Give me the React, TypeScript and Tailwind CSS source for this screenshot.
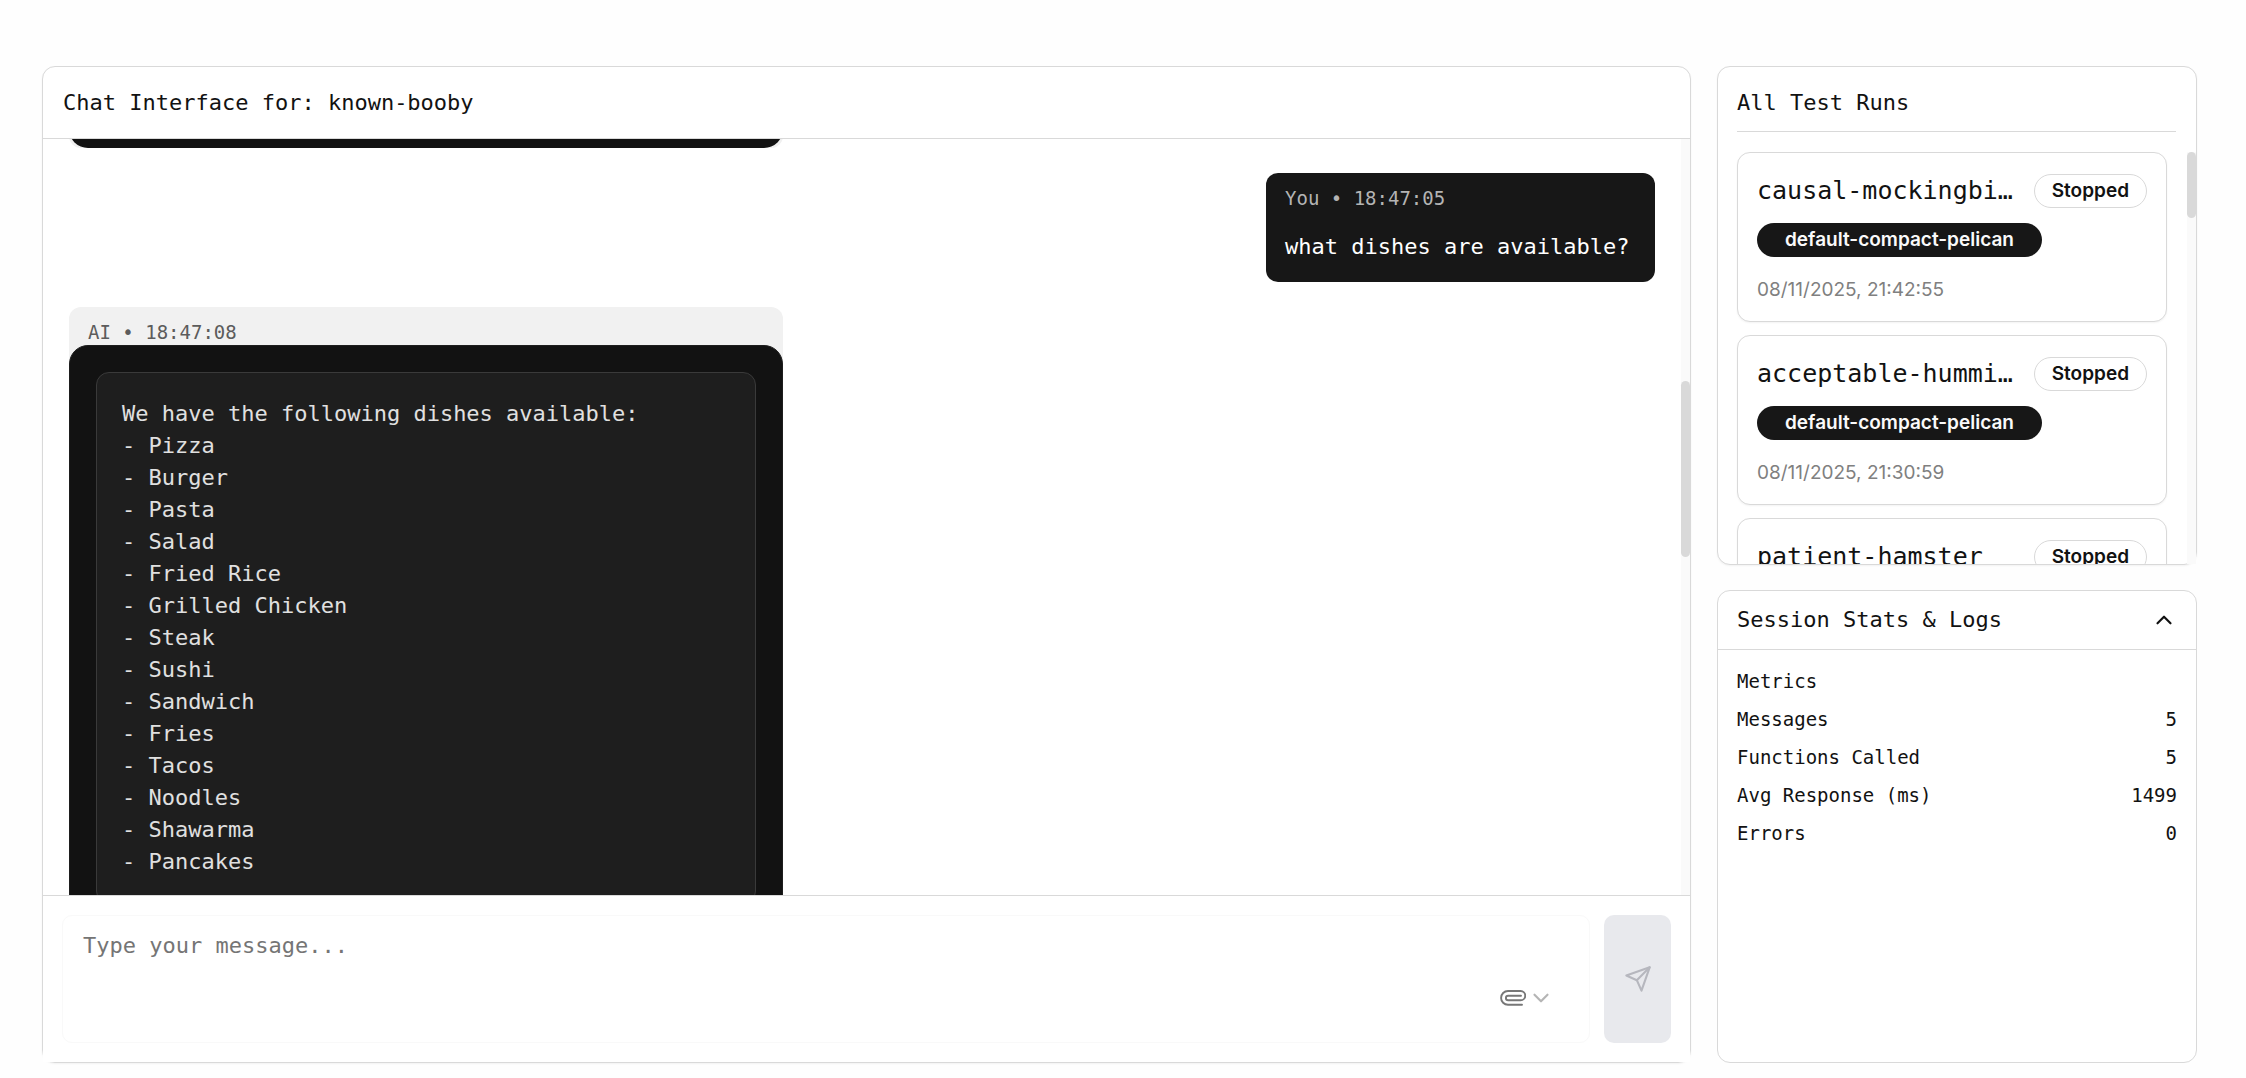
import React from "react";
import { ChevronDown, ChevronUp } from "lucide-react";

const dishes = [
  "Pizza",
  "Burger",
  "Pasta",
  "Salad",
  "Fried Rice",
  "Grilled Chicken",
  "Steak",
  "Sushi",
  "Sandwich",
  "Fries",
  "Tacos",
  "Noodles",
  "Shawarma",
  "Pancakes",
];

const runs = [
  { name: "causal-mockingbird", pipeline: "default-compact-pelican", date: "08/11/2025, 21:42:55" },
  { name: "acceptable-hummingbird", pipeline: "default-compact-pelican", date: "08/11/2025, 21:30:59" },
  { name: "patient-hamster", pipeline: "default-compact-pelican", date: "08/11/2025, 21:12:30" },
];

const metrics = [
  { label: "Messages", value: "5" },
  { label: "Functions Called", value: "5" },
  { label: "Avg Response (ms)", value: "1499" },
  { label: "Errors", value: "0" },
];

function PaperclipIcon() {
  return (
    <svg width="26" height="16" viewBox="0 0 26 16" fill="none" stroke="#777777" strokeWidth="1.9" strokeLinecap="round" aria-hidden="true">
      <path d="M22 14.8H8a6.9 6.9 0 0 1 0-13.8h12.6a4.6 4.6 0 0 1 0 9.3H8.2a2.3 2.3 0 0 1 0-4.6H21" />
    </svg>
  );
}

function SendIcon() {
  return (
    <svg width="28" height="28" viewBox="0 0 24 24" fill="none" stroke="#b6b7be" strokeWidth="1.8" strokeLinecap="round" strokeLinejoin="round" aria-hidden="true">
      <path d="M22 2 11 13" />
      <path d="M22 2 15 22l-4-9-9-4z" />
    </svg>
  );
}

function ChatPanel() {
  return (
    <main className="flex min-h-0 min-w-0 flex-col rounded-[13px] border border-[#d9d9d9] bg-white shadow-xs">
      <header className="flex h-[72px] shrink-0 items-center border-b border-[#d9d9d9] px-5">
        <h1 className="text-[22px] leading-8">Chat Interface for: known-booby</h1>
      </header>

      <section aria-label="Messages" className="relative flex min-h-0 flex-1 flex-col gap-[25px] overflow-hidden pl-[26px] pr-[35px]">
        <div className="flex h-[9px] w-[45%] shrink-0 items-end overflow-hidden">
          <div className="w-full shrink-0 rounded-xl bg-[#f0f0f0]">
            <div className="h-16 rounded-[19px] bg-[#121212]" />
          </div>
        </div>

        <article className="flex min-w-[389px] shrink-0 flex-col gap-[18px] self-end rounded-xl bg-[#171717] px-[19px] pt-[11px] pb-[18px]">
          <p className="text-[19px] leading-7 text-[#b4b4b4]">You • 18:47:05</p>
          <p className="text-[22px] leading-[34px] text-white">what dishes are available?</p>
        </article>

        <article className="w-[45%] shrink-0 rounded-xl bg-[#f1f1f1]">
          <p className="px-[19px] pt-3 pb-0 text-[19px] leading-[26px] text-[#5c5c5c]">AI • 18:47:08</p>
          <div className="rounded-[19px] border border-[#1e1e1e] bg-[#121212] p-[26px]">
            <pre className="rounded-[13px] border border-[#3a3a3a] bg-[#1e1e1e] p-[25px] font-['DejaVu_Sans_Mono',monospace] text-[22px] leading-8 text-[#e0e0e0]">
              {"We have the following dishes available:\n" + dishes.map((d) => "- " + d).join("\n")}
            </pre>
          </div>
        </article>

        <div className="absolute inset-y-0 right-0 w-[9px] bg-[#fafafa]">
          <div className="mt-[242px] h-44 rounded-full bg-[#d9d9d9]" />
        </div>
      </section>

      <form className="flex shrink-0 gap-[14px] border-t border-[#d9d9d9] bg-white p-[19px]">
        <div className="relative flex min-w-0 flex-1">
          <textarea
            aria-label="Message"
            placeholder="Type your message..."
            className="h-32 w-full resize-none rounded-[10px] border border-[#f9f9f9] bg-white px-5 py-[14px] text-[22px] leading-8 outline-none placeholder:text-[#757575]"
          />
          <button type="button" aria-label="Attach a file" className="absolute right-9 bottom-8 flex items-center gap-[2px]">
            <PaperclipIcon />
            <ChevronDown size={26} strokeWidth={2} color="#b5b5b5" />
          </button>
        </div>
        <button type="submit" aria-label="Send" className="flex w-[67px] items-center justify-center rounded-[10px] bg-[#e8e9ed]">
          <SendIcon />
        </button>
      </form>
    </main>
  );
}

function TestRuns() {
  return (
    <section className="flex h-1/2 shrink-0 flex-col rounded-[13px] border border-[#d9d9d9] bg-white shadow-xs">
      <div className="mr-5 ml-[19px] flex h-[65px] shrink-0 items-center border-b border-[#d9d9d9] pt-2">
        <h2 className="text-[22px] leading-8">All Test Runs</h2>
      </div>
      <div className="relative mt-5 min-h-0 flex-1 overflow-hidden">
        <ul className="flex flex-col gap-[13px] pl-[19px] pr-[29px]">
          {runs.map((run) => (
            <li key={run.name} className="rounded-[13px] border border-[#d9d9d9] bg-white px-[19px] pt-[21px] pb-[17px] shadow-xs">
              <div className="flex items-center gap-3">
                <h3 className="min-w-0 flex-1 truncate text-[25px] leading-[34px]">{run.name}</h3>
                <span className="flex h-[34px] items-center rounded-full border border-[#d9d9d9] px-[17px] font-['Inter',sans-serif] text-[19px] font-semibold">
                  Stopped
                </span>
              </div>
              <span className="mt-[15px] flex h-[34px] w-fit items-center rounded-full bg-[#171717] px-7 font-['Inter',sans-serif] text-[19px] font-semibold text-[#fafafa]">
                {run.pipeline}
              </span>
              <p className="mt-[19px] font-['Inter',sans-serif] text-[19px] leading-7 text-[#808080]">{run.date}</p>
            </li>
          ))}
        </ul>
        <div className="absolute inset-y-0 right-0 w-[9px] bg-[#fafafa]">
          <div className="h-[66px] rounded-full bg-[#d9d9d9]" />
        </div>
      </div>
    </section>
  );
}

function SessionStats() {
  return (
    <section className="min-h-0 flex-1 rounded-[13px] border border-[#d9d9d9] bg-white">
      <button type="button" aria-expanded="true" className="flex h-[59px] w-full items-center justify-between border-b border-[#d9d9d9] pl-[19px] pr-[19px] text-[22px] leading-8">
        Session Stats &amp; Logs
        <ChevronUp size={26} strokeWidth={2} />
      </button>
      <div className="px-[19px] pt-[17px] text-[19px] leading-[29px]">
        <h3>Metrics</h3>
        <dl className="mt-[9px] flex flex-col gap-[9px]">
          {metrics.map((m) => (
            <div key={m.label} className="flex justify-between">
              <dt>{m.label}</dt>
              <dd>{m.value}</dd>
            </div>
          ))}
        </dl>
      </div>
    </section>
  );
}

export default function App() {
  return (
    <div className="grid h-screen grid-cols-[minmax(0,1fr)_480px] grid-rows-[minmax(0,1fr)] gap-[26px] bg-[#fefefe] pt-[66px] pr-[49px] pb-[15px] pl-[42px] font-['DejaVu_Sans_Mono',monospace] text-[#121212]">
      <ChatPanel />
      <aside className="flex min-h-0 flex-col gap-[25px]">
        <TestRuns />
        <SessionStats />
      </aside>
    </div>
  );
}
